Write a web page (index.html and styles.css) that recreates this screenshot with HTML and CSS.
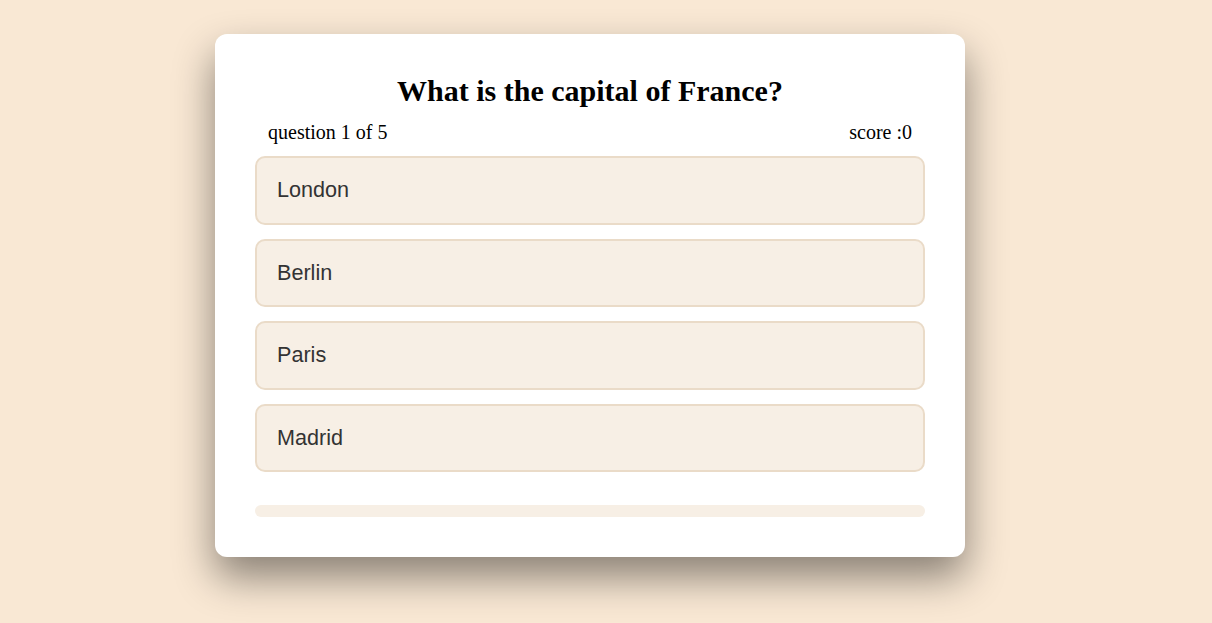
FILE: index.html
```html
<!DOCTYPE html>
<html>
<head>
<meta charset="utf-8">
<link rel="stylesheet" href="styles.css">
</head>
<body>
<div class="page">
  <div class="card">
    <h1 class="question">What is the capital of France?</h1>
    <div class="meta">
      <span>question 1 of 5</span>
      <span>score :0</span>
    </div>
    <div class="options">
      <button class="option">London</button>
      <button class="option">Berlin</button>
      <button class="option">Paris</button>
      <button class="option">Madrid</button>
    </div>
    <div class="progress"><div class="progress-fill"></div></div>
  </div>
</div>
</body>
</html>
```
FILE: styles.css
```css
html, body {
  margin: 0;
  padding: 0;
}
body {
  background: #f9e8d4;
  font-family: "Liberation Serif", "Times New Roman", serif;
  min-height: 623px;
}
.page {
  display: flex;
  justify-content: center;
  padding-top: 34px;
}
.card {
  box-sizing: border-box;
  width: 750px;
  background: #ffffff;
  border-radius: 12px;
  padding: 40px 40px 40px;
  box-shadow: 0 20px 40px rgba(0, 0, 0, 0.45);
  margin-left: -32px;
}
.question {
  margin: 0;
  text-align: center;
  font-size: 30px;
  font-weight: bold;
  color: #000;
}
.meta {
  display: flex;
  justify-content: space-between;
  padding: 0 13px;
  margin-top: 13px;
  font-size: 20px;
  color: #000;
}
.options {
  display: flex;
  flex-direction: column;
  gap: 14px;
  margin-top: 12px;
}
.option {
  box-sizing: border-box;
  height: 68.5px;
  text-align: left;
  padding: 0 20px;
  background: #f7efe5;
  border: 2px solid #eadbc8;
  border-radius: 10px;
  font-family: "Liberation Sans", Arial, sans-serif;
  font-size: 21.6px;
  color: #333;
}
.progress {
  margin-top: 32.5px;
  height: 12px;
  background: #f7efe5;
  border-radius: 6px;
  overflow: hidden;
}
.progress-fill {
  width: 0;
  height: 100%;
}
```
